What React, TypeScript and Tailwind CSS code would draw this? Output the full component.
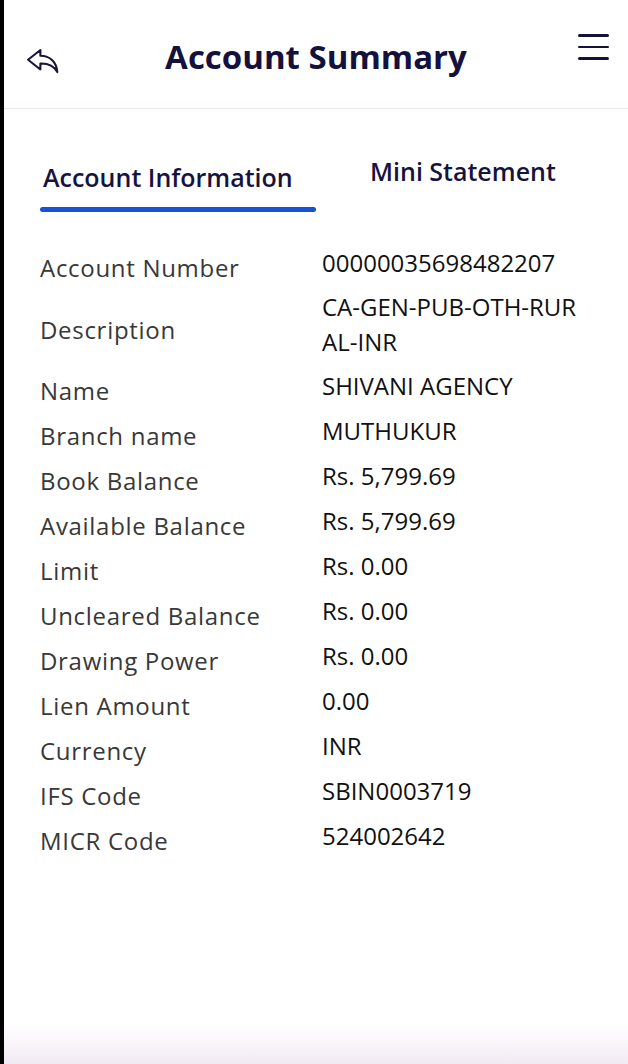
import React from 'react';

const rows: { label: string; value: React.ReactNode; tall?: boolean }[] = [
  { label: 'Account Number', value: '00000035698482207' },
  {
    label: 'Description',
    value: (
      <>
        CA-GEN-PUB-OTH-RUR
        <br />
        AL-INR
      </>
    ),
    tall: true,
  },
  { label: 'Name', value: 'SHIVANI AGENCY' },
  { label: 'Branch name', value: 'MUTHUKUR' },
  { label: 'Book Balance', value: 'Rs. 5,799.69' },
  { label: 'Available Balance', value: 'Rs. 5,799.69' },
  { label: 'Limit', value: 'Rs. 0.00' },
  { label: 'Uncleared Balance', value: 'Rs. 0.00' },
  { label: 'Drawing Power', value: 'Rs. 0.00' },
  { label: 'Lien Amount', value: '0.00' },
  { label: 'Currency', value: 'INR' },
  { label: 'IFS Code', value: 'SBIN0003719' },
  { label: 'MICR Code', value: '524002642' },
];

function BackIcon() {
  return (
    <svg width="34" height="26" viewBox="0 0 26 20" fill="none">
      <path
        d="M11 1.5 L1.5 9 L11 16.5 L11 12 C17 11.8 21.5 14 24 18.5 C23.5 11 18.5 6 11 6 Z"
        stroke="#1a1440"
        strokeWidth="1.6"
        strokeLinejoin="round"
      />
    </svg>
  );
}

function MenuIcon() {
  return (
    <div className="flex flex-col gap-[9px] w-[31px]">
      <div className="h-[2.5px] bg-[#15123a] rounded-full" />
      <div className="h-[2.5px] bg-[#15123a] rounded-full" />
      <div className="h-[2.5px] bg-[#15123a] rounded-full" />
    </div>
  );
}

export default function App() {
  return (
    <div className="w-[628px] min-h-[1064px] flex flex-col bg-white border-l-4 border-black font-['Open_Sans',sans-serif]">
      {/* Header */}
      <header className="h-[109px] grid grid-cols-[1fr_auto_1fr] items-center border-b border-[#f1e6ea] px-[22px]">
        <div className="mt-[14px]">
          <BackIcon />
        </div>
        <h1 className="mt-[4px] text-[33px] font-bold text-[#14113d] leading-none">
          Account Summary
        </h1>
        <div className="flex justify-end mb-[14px] mr-[-3px]">
          <MenuIcon />
        </div>
      </header>

      {/* Tabs */}
      <div className="grid grid-cols-[276px_1fr] pl-[36px] pt-[48px]">
        <div>
          <div className="pl-[3px] pt-[3px] text-[25px] font-semibold leading-[34px] text-[#17133f]">
            Account Information
          </div>
          <div className="mt-[13px] h-[5px] rounded-full bg-[#1652d8]" />
        </div>
        <div className="pl-[54px] -mt-[3px] text-[25px] font-semibold leading-[34px] text-[#17133f]">
          Mini Statement
        </div>
      </div>

      {/* Details */}
      <div className="mt-[32px] pl-[36px] flex flex-col gap-y-[8px]">
        {rows.map((r) => (
          <div key={r.label} className="grid grid-cols-[282px_1fr] items-center">
            <div className="pt-[10px] text-[24px] tracking-[0.7px] leading-[27px] text-[#383838]">
              {r.label}
            </div>
            <div
              className={`text-[24px] text-[#111111] ${r.tall ? 'leading-[35px]' : 'leading-[37px]'}`}
            >
              {r.value}
            </div>
          </div>
        ))}
      </div>

      <div className="mt-auto h-[40px] bg-gradient-to-b from-white to-[#f2eaf3]" />
    </div>
  );
}
